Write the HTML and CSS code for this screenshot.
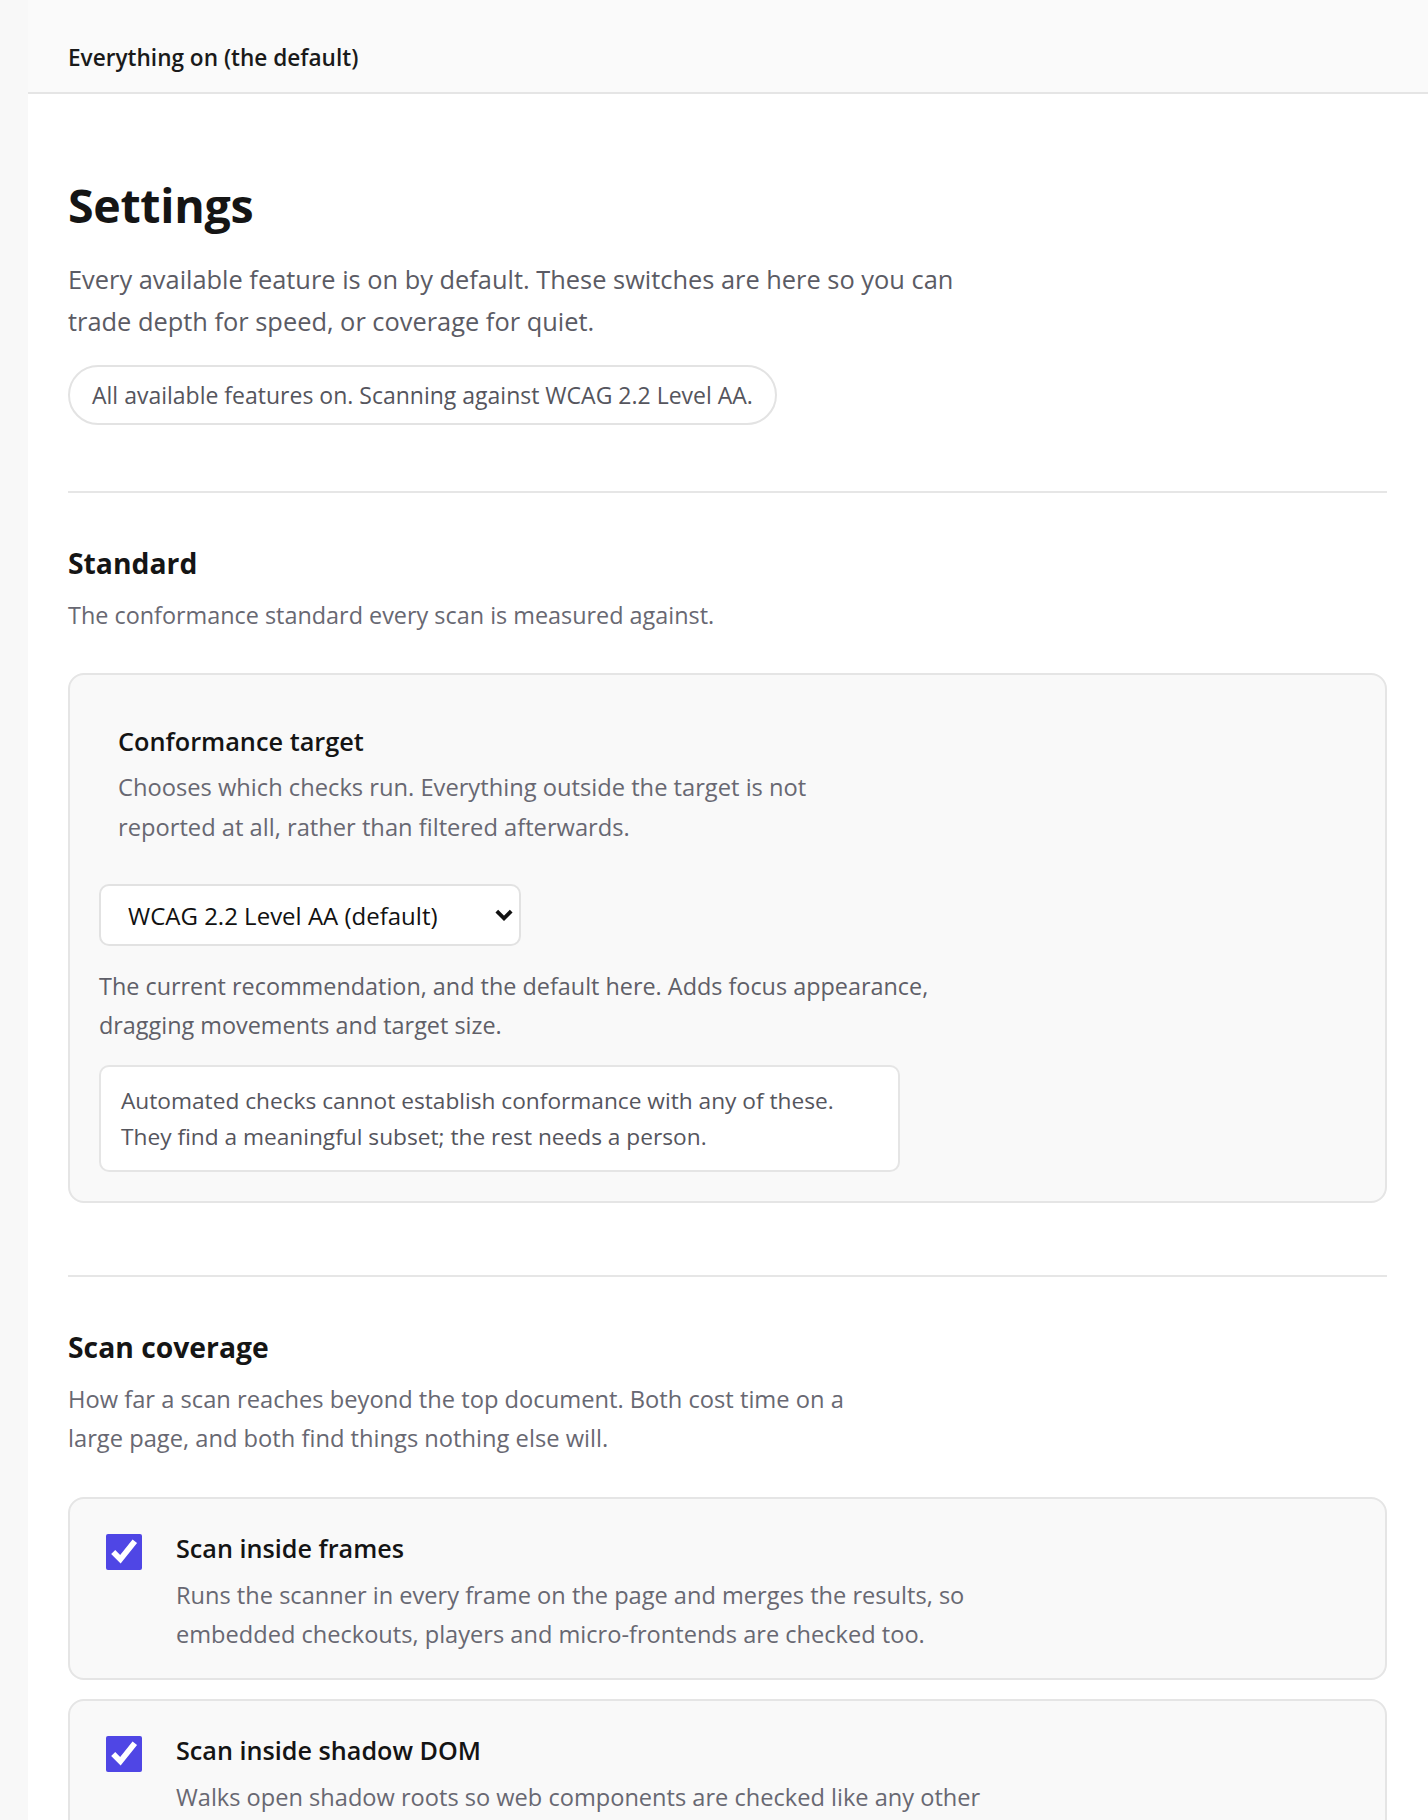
FILE: index.html
```html
<!DOCTYPE html>
<html lang="en">
<head>
<meta charset="utf-8">
<title>Settings</title>
<link rel="stylesheet" href="styles.css">
</head>
<body>
<div class="app">
  <aside class="rail"></aside>
  <div class="main">
    <header class="topbar">Everything on (the default)</header>
    <main class="content">
      <h1 class="page-title">Settings</h1>
      <p class="intro">Every available feature is on by default. These switches are here so you can trade depth for speed, or coverage for quiet.</p>
      <div class="status-pill">All available features on. Scanning against WCAG 2.2 Level AA.</div>

      <section class="section">
        <h2 class="section-title">Standard</h2>
        <p class="section-desc">The conformance standard every scan is measured against.</p>
        <div class="card field-card">
          <div class="field-head">
            <h3 class="field-title">Conformance target</h3>
            <p class="field-desc">Chooses which checks run. Everything outside the target is not reported at all, rather than filtered afterwards.</p>
          </div>
          <div class="select-wrap">
            <select class="select" aria-label="Conformance target">
              <option>WCAG 2.2 Level AA (default)</option>
            </select>
            <svg class="select-chevron" width="18" height="13" viewBox="0 0 18 13" aria-hidden="true"><path d="M1.8 2.6 L9 9.8 L16.2 2.6" fill="none" stroke="#111" stroke-width="3.8" stroke-linejoin="miter"/></svg>
          </div>
          <p class="option-desc">The current recommendation, and the default here. Adds focus appearance, dragging movements and target size.</p>
          <div class="note">Automated checks cannot establish conformance with any of these. They find a meaningful subset; the rest needs a person.</div>
        </div>
      </section>

      <section class="section section-next">
        <h2 class="section-title">Scan coverage</h2>
        <p class="section-desc section-desc-wrap">How far a scan reaches beyond the top document. Both cost time on a large page, and both find things nothing else will.</p>
        <div class="toggle-list">
          <label class="card toggle-card">
            <input class="toggle-box" type="checkbox" checked>
            <span class="toggle-body">
              <span class="toggle-title">Scan inside frames</span>
              <span class="toggle-desc">Runs the scanner in every frame on the page and merges the results, so embedded checkouts, players and micro-frontends are checked too.</span>
            </span>
          </label>
          <label class="card toggle-card">
            <input class="toggle-box" type="checkbox" checked>
            <span class="toggle-body">
              <span class="toggle-title">Scan inside shadow DOM</span>
              <span class="toggle-desc">Walks open shadow roots so web components are checked like any other part of the page, instead of being skipped as opaque elements.</span>
            </span>
          </label>
        </div>
      </section>
    </main>
  </div>
</div>
</body>
</html>
```

FILE: styles.css
```css
html, body {
  margin: 0;
  padding: 0;
}

body {
  background: #f8f8f8;
  font-family: "Open Sans", "Noto Sans", sans-serif;
  color: #141414;
}

.app {
  display: flex;
  min-height: 100vh;
}

.rail {
  width: 28px;
  flex: none;
  background: #f8f8f8;
}

.main {
  flex: 1;
  min-width: 0;
  display: flex;
  flex-direction: column;
}

.topbar {
  height: 94px;
  box-sizing: border-box;
  padding: 40px 40px 0;
  line-height: 36px;
  font-size: 22.6px;
  font-weight: 600;
  color: #1a1a1a;
  background: #fafafa;
  border-bottom: 2px solid #e5e5e5;
}

.content {
  flex: 1;
  background: #ffffff;
  padding: 82px 41px 40px 40px;
}

.page-title {
  margin: 0;
  font-size: 46.5px;
  line-height: 58px;
  font-weight: 700;
  color: #151515;
  letter-spacing: -0.3px;
}

.intro {
  margin: 24px 0 0;
  max-width: 920px;
  font-size: 25.4px;
  line-height: 42px;
  color: #5b5b64;
}

.status-pill {
  width: fit-content;
  margin-top: 23px;
  padding: 13px 22px;
  border: 2px solid #e3e3e3;
  border-radius: 999px;
  font-size: 23px;
  line-height: 30px;
  color: #55555d;
}

.section {
  margin-top: 66px;
  padding-top: 52px;
  border-top: 2px solid #e6e6e6;
}

.section-next {
  margin-top: 72px;
}

.section-title {
  margin: 0;
  font-size: 28.3px;
  line-height: 36px;
  font-weight: 700;
  color: #151515;
}

.section-desc {
  margin: 15px 0 0;
  font-size: 23.4px;
  line-height: 39px;
  color: #686872;
}

.section-desc-wrap {
  max-width: 805px;
  font-size: 23.7px;
}

.card {
  background: #f9f9f9;
  border: 2px solid #e5e5e5;
  border-radius: 16px;
}

.field-card {
  margin-top: 38px;
  padding: 29px;
}

.field-head {
  padding: 20px 19px 0;
}

.field-title {
  margin: 0;
  font-size: 25.3px;
  line-height: 34px;
  font-weight: 600;
  color: #141414;
}

.field-desc {
  margin: 9px 0 0;
  max-width: 735px;
  font-size: 23.7px;
  line-height: 40px;
  color: #686872;
}

.select-wrap {
  position: relative;
  width: 422px;
  margin-top: 37px;
}

.select {
  display: block;
  width: 100%;
  height: 62px;
  box-sizing: border-box;
  margin: 0;
  padding: 0 40px 0 27px;
  appearance: none;
  -webkit-appearance: none;
  background: #ffffff;
  border: 2px solid #e2e2e2;
  border-radius: 10px;
  font-family: inherit;
  font-size: 24px;
  color: #111111;
}

.select-chevron {
  position: absolute;
  right: 8px;
  top: 50%;
  transform: translateY(-50%);
  pointer-events: none;
}

.option-desc {
  margin: 21px 0 0;
  max-width: 870px;
  font-size: 23.4px;
  line-height: 38.5px;
  color: #5f5f68;
}

.note {
  margin-top: 21px;
  max-width: 801px;
  box-sizing: border-box;
  padding: 16px 40px 15px 20px;
  background: #ffffff;
  border: 2px solid #e5e5e5;
  border-radius: 10px;
  font-size: 22.7px;
  line-height: 36px;
  color: #55555d;
}

.toggle-list {
  margin-top: 39px;
  display: flex;
  flex-direction: column;
  gap: 19px;
}

.toggle-card {
  display: grid;
  grid-template-columns: 36px 1fr;
  column-gap: 34px;
  padding: 32px 36px 25px;
  cursor: pointer;
}

.toggle-box {
  width: 36px;
  height: 36px;
  margin: 3px 0 0;
  accent-color: #4f46e5;
}

.toggle-body {
  display: flex;
  flex-direction: column;
  gap: 11px;
}

.toggle-title {
  font-size: 25.2px;
  line-height: 34px;
  font-weight: 600;
  color: #141414;
}

.toggle-desc {
  max-width: 840px;
  font-size: 23.6px;
  line-height: 38.7px;
  color: #686872;
}
```
